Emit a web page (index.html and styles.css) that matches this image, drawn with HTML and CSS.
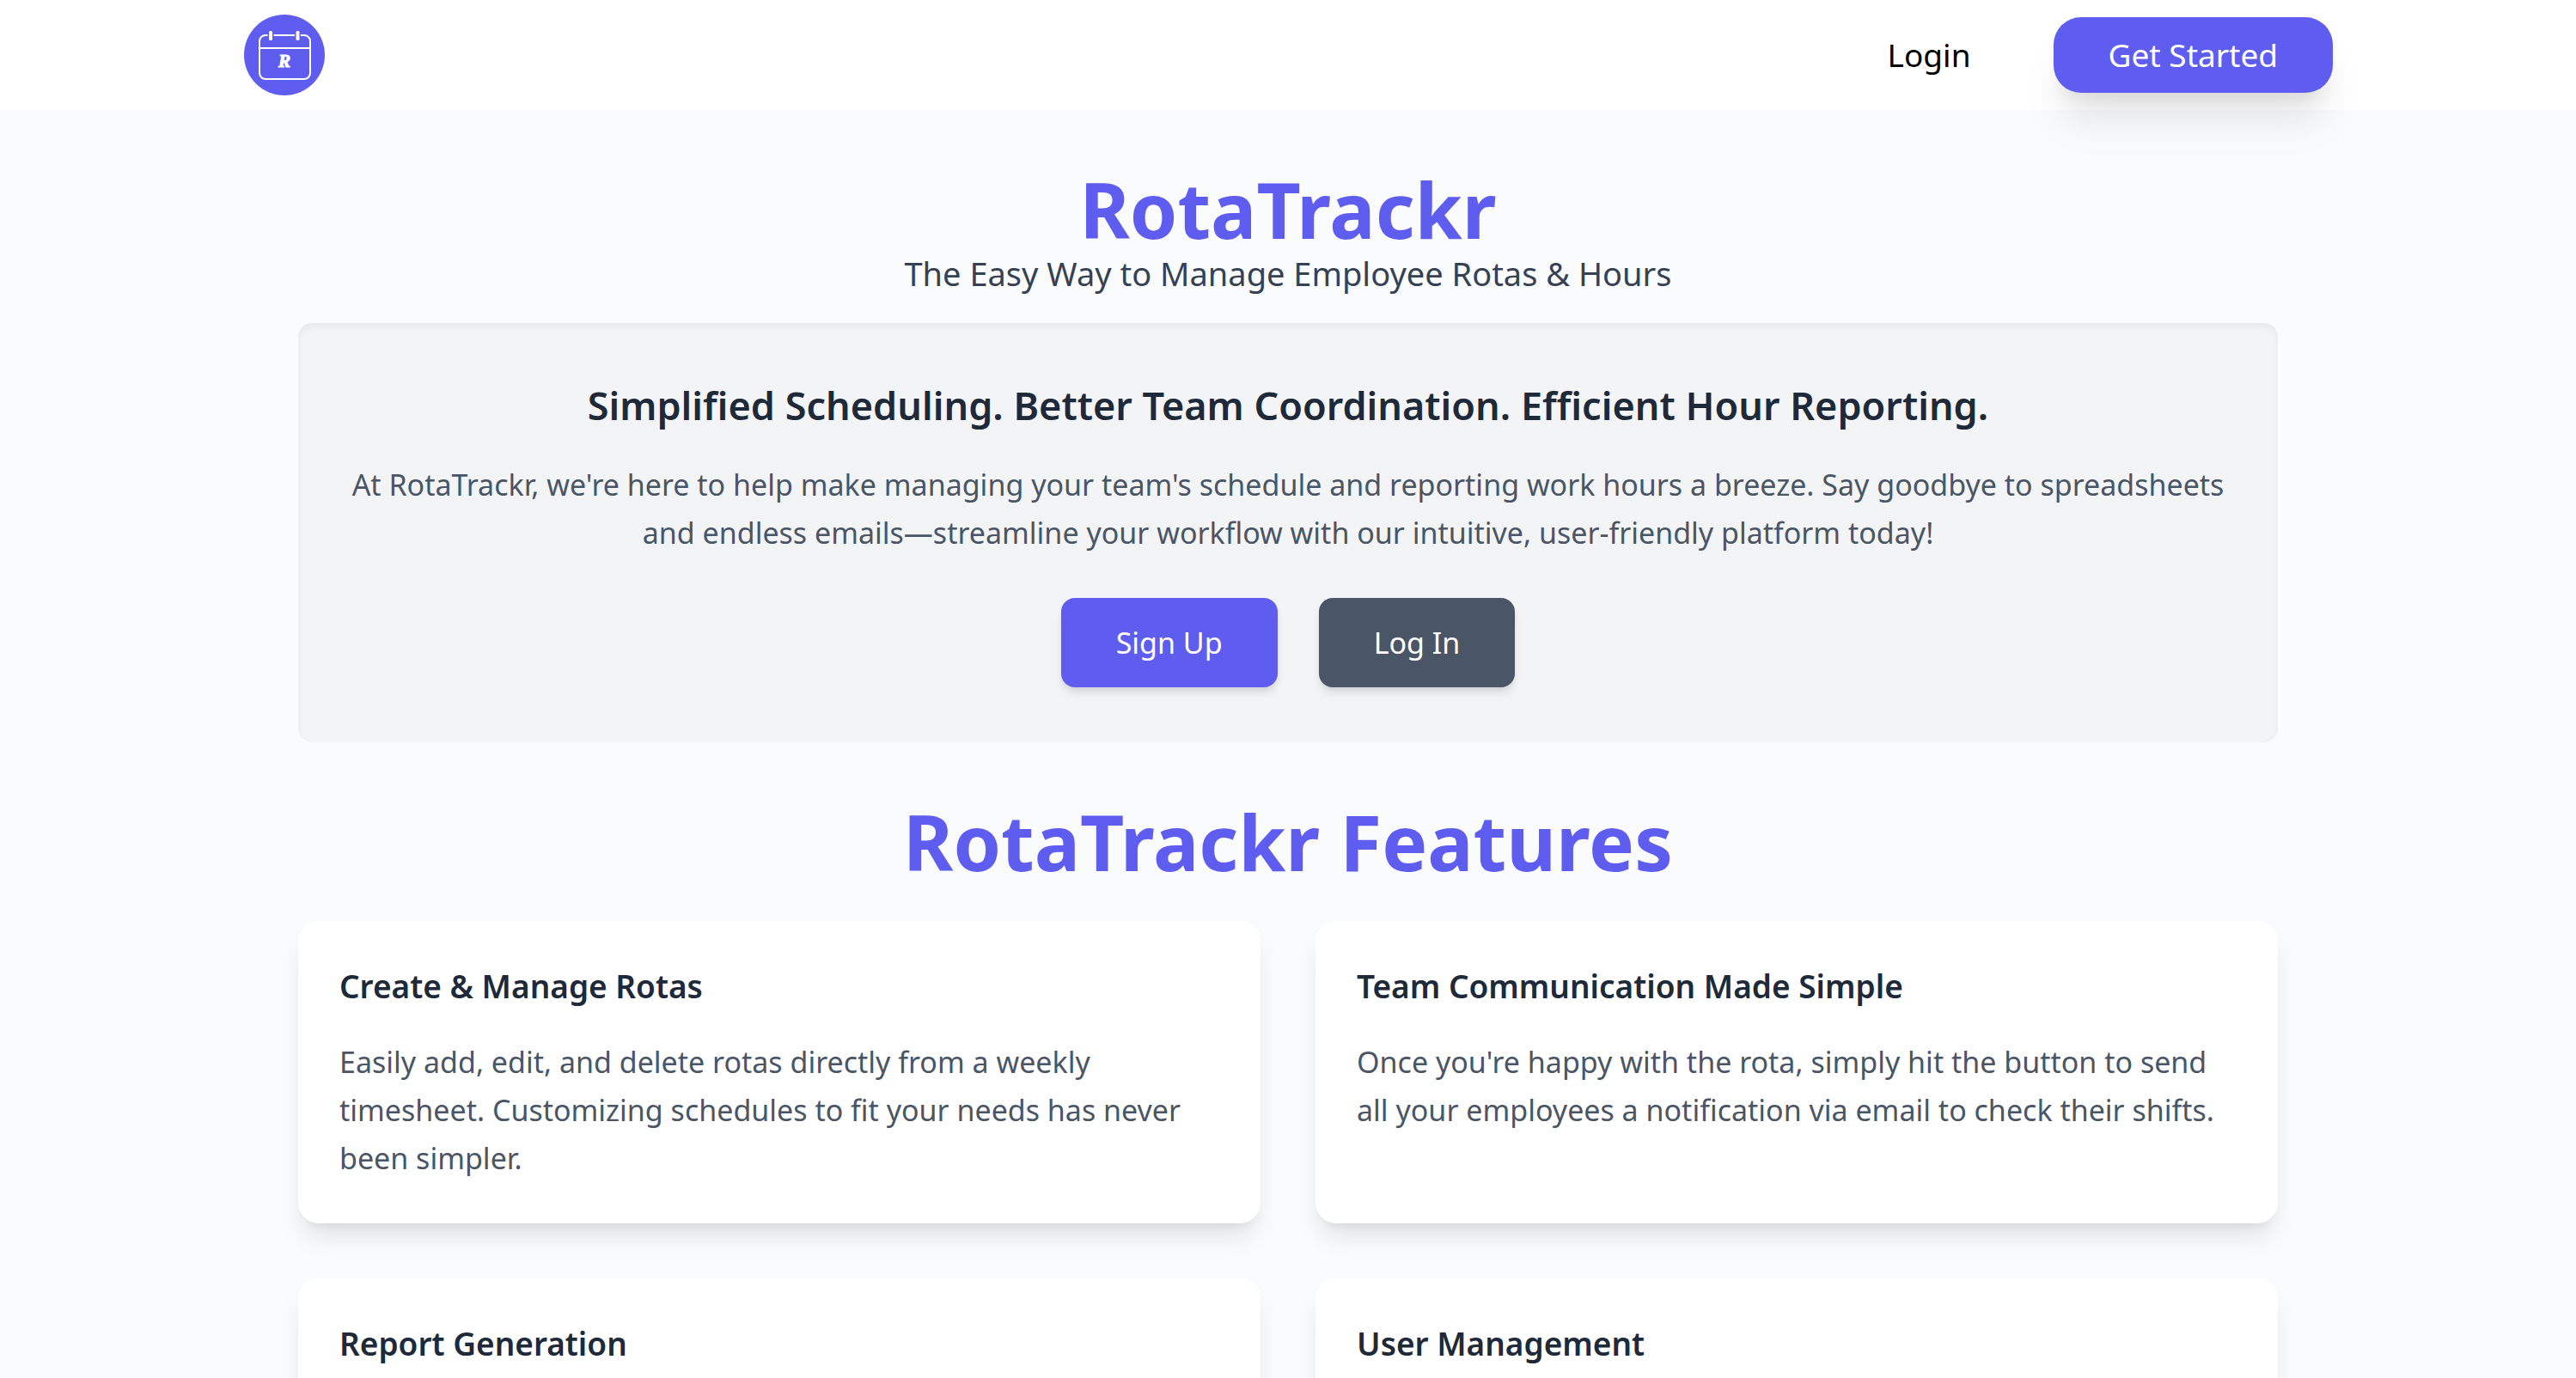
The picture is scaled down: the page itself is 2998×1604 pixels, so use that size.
FILE: index.html
```html
<!DOCTYPE html>
<html lang="en">
<head>
  <meta charset="utf-8">
  <meta name="viewport" content="width=device-width, initial-scale=1">
  <title>RotaTrackr</title>
  <link rel="stylesheet" href="styles.css">
</head>
<body>
  <header class="site-header">
    <nav class="nav">
      <a class="logo" href="#" aria-label="RotaTrackr home">
        <svg class="logo-mark" viewBox="-1 -1 96 96" aria-hidden="true">
          <circle class="logo-disc" cx="47" cy="47" r="47"/>
          <g class="logo-lines">
            <rect x="18" y="24" width="59" height="51" rx="7"/>
            <path d="M18 39h59"/>
          </g>
          <g class="logo-gaps">
            <rect x="27.500" y="17" width="7" height="14"/>
            <rect x="59" y="17" width="7" height="14"/>
          </g>
          <g class="logo-rings">
            <rect x="29" y="19" width="4" height="11" rx="1.500"/>
            <rect x="60.500" y="19" width="4" height="11" rx="1.500"/>
          </g>
          <text class="logo-letter" x="47" y="61" text-anchor="middle">R</text>
        </svg>
      </a>
      <div class="nav-actions">
        <a class="nav-link" href="#">Login</a>
        <a class="cta" href="#">Get Started</a>
      </div>
    </nav>
  </header>

  <main class="page">
    <h1 class="title">RotaTrackr</h1>
    <p class="tagline">The Easy Way to Manage Employee Rotas &amp; Hours</p>

    <section class="hero">
      <h2 class="hero-title">Simplified Scheduling. Better Team Coordination. Efficient Hour Reporting.</h2>
      <p class="body-text">At RotaTrackr, we're here to help make managing your team's schedule and reporting work hours a breeze. Say goodbye to spreadsheets and endless emails—streamline your workflow with our intuitive, user-friendly platform today!</p>
      <div class="hero-actions">
        <button class="button button-primary" type="button">Sign Up</button>
        <button class="button button-secondary" type="button">Log In</button>
      </div>
    </section>

    <h2 class="title features-title">RotaTrackr Features</h2>
    <div class="features">
      <article class="card">
        <h3 class="card-title">Create &amp; Manage Rotas</h3>
        <p class="body-text">Easily add, edit, and delete rotas directly from a weekly timesheet. Customizing schedules to fit your needs has never been simpler.</p>
      </article>
      <article class="card">
        <h3 class="card-title">Team Communication Made Simple</h3>
        <p class="body-text">Once you're happy with the rota, simply hit the button to send all your employees a notification via email to check their shifts.</p>
      </article>
      <article class="card">
        <h3 class="card-title">Report Generation</h3>
      </article>
      <article class="card">
        <h3 class="card-title">User Management</h3>
      </article>
    </div>
  </main>
</body>
</html>
```
FILE: styles.css
```css
*,
*::before,
*::after {
  box-sizing: border-box;
}

:root {
  --indigo: #5f5df0;
  --ink: #1e2939;
  --slate: #4a5565;
}

body {
  margin: 0;
  background: #fafbfd;
  color: #000;
  font-family: "Segoe UI", "Noto Sans", sans-serif;
  font-size: 34px;
  line-height: 56px;
}

h1,
h2,
h3,
p {
  margin: 0;
}

a {
  color: inherit;
  text-decoration: none;
}

.site-header {
  background: #fff;
}

.nav {
  display: flex;
  align-items: center;
  justify-content: space-between;
  max-width: 2560px;
  min-height: 128px;
  margin: 0 auto;
  padding: 0 64px;
}

.logo-mark {
  display: block;
  width: 96px;
  height: 96px;
}

.logo-disc,
.logo-gaps {
  fill: var(--indigo);
}

.logo-lines {
  fill: none;
  stroke: #fff;
  stroke-width: 2;
}

.logo-rings,
.logo-letter {
  fill: #fff;
}

.logo-letter {
  font: italic bold 21px "Liberation Serif", serif;
  stroke: #fff;
  stroke-width: 1;
}

.nav-actions {
  display: flex;
  align-items: center;
  gap: 96px;
  font-size: 37px;
}

.cta {
  padding: 16px 64px;
  border-radius: 32px;
  background: var(--indigo);
  color: #fff;
  box-shadow: 0 40px 50px -10px rgb(0 0 0 / 10%), 0 16px 20px -12px rgb(0 0 0 / 10%);
}

.page {
  max-width: 2304px;
  margin: 0 auto;
  padding: 64px 0;
}

.title {
  color: var(--indigo);
  font-size: 89px;
  font-weight: 700;
  line-height: 104px;
  text-align: center;
}

.tagline {
  color: #364153;
  font-size: 38px;
  line-height: 44px;
  text-align: center;
}

.hero {
  margin-top: 36px;
  padding: 64px 56px;
  border-radius: 16px;
  background: #f3f4f6;
  box-shadow: inset 0 4px 8px rgb(0 0 0 / 5%);
  text-align: center;
}

.hero-title {
  margin-bottom: 32px;
  color: var(--ink);
  font-size: 45px;
  font-weight: 600;
  line-height: 64px;
}

.body-text {
  color: var(--slate);
}

.hero-actions {
  display: flex;
  justify-content: center;
  gap: 48px;
  margin-top: 48px;
}

.button {
  padding: 24px 64px;
  border: 0;
  border-radius: 16px;
  color: #fff;
  font: inherit;
  box-shadow: 0 8px 12px -2px rgb(0 0 0 / 10%), 0 4px 8px -4px rgb(0 0 0 / 10%);
}

.button-primary {
  background: var(--indigo);
}

.button-secondary {
  background: var(--slate);
}

.features-title {
  margin: 64px 0 40px;
}

.features {
  display: grid;
  grid-template-columns: 1fr 1fr;
  gap: 64px;
}

.card {
  padding: 48px;
  border-radius: 24px;
  background: #fff;
  box-shadow: 0 20px 30px -6px rgb(0 0 0 / 10%), 0 8px 12px -8px rgb(0 0 0 / 10%);
}

.card-title {
  margin-bottom: 32px;
  color: var(--ink);
  font-size: 37px;
  font-weight: 600;
}
```
